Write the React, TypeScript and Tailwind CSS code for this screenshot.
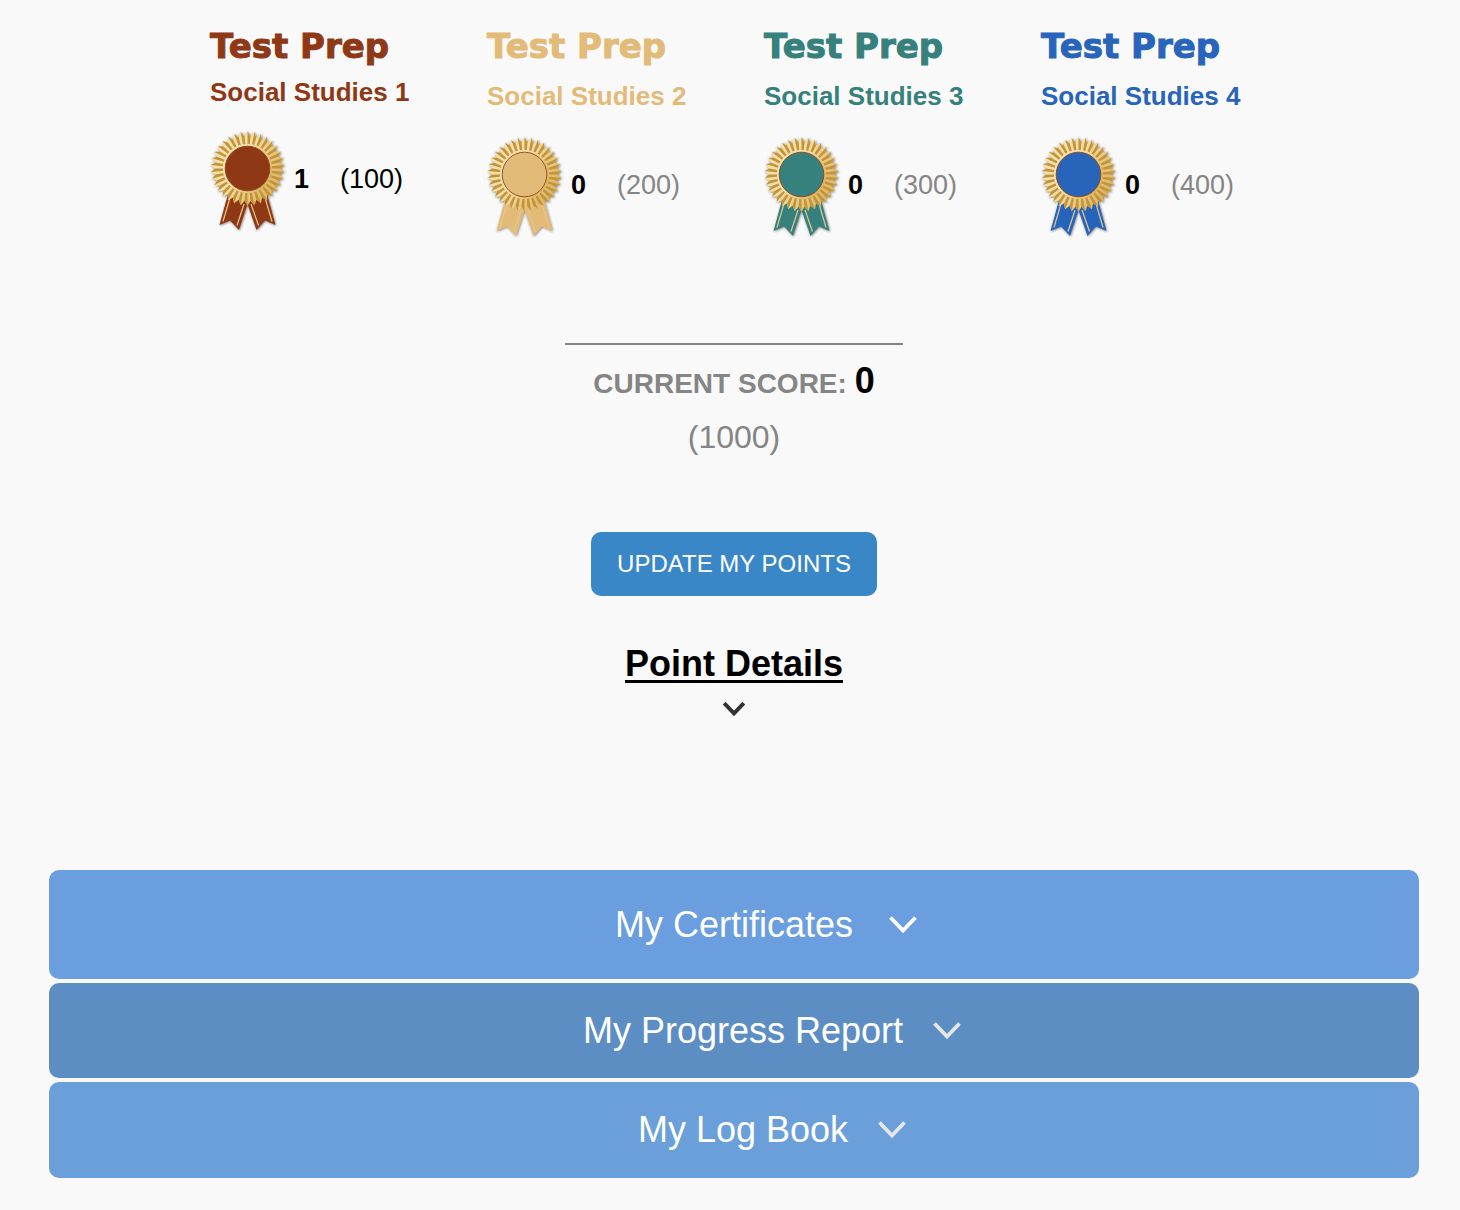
import React, { useState } from 'react';
import clsx from 'clsx';

interface Badge {
  id: number;
  subject: string;
  earned: number;
  points: number;
  color: string;
  textClass: string;
}

const badges: Badge[] = [
  { id: 1, subject: 'Social Studies 1', earned: 1, points: 100, color: '#8f3815', textClass: 'text-[#8f3815]' },
  { id: 2, subject: 'Social Studies 2', earned: 0, points: 200, color: '#e3bb78', textClass: 'text-[#e3bb78]' },
  { id: 3, subject: 'Social Studies 3', earned: 0, points: 300, color: '#36807d', textClass: 'text-[#36807d]' },
  { id: 4, subject: 'Social Studies 4', earned: 0, points: 400, color: '#2864ba', textClass: 'text-[#2864ba]' },
];

const TEETH = 34;

// Point on the rosette, measured in teeth clockwise from the top
const point = (radius: number, step: number) => {
  const angle = (step / TEETH) * Math.PI * 2 - Math.PI / 2;
  return `${(39.5 + radius * Math.cos(angle)).toFixed(2)} ${(42.5 + radius * Math.sin(angle)).toFixed(2)}`;
};

const teeth = Array.from({ length: TEETH }, (_, i) => i);

const outline = teeth.map((i) => `${point(32.5, i - 0.5)} L${point(37.3, i)}`).join(' L');

const Ribbon: React.FC<{ color: string }> = ({ color }) => {
  const id = color.slice(1);

  return (
    <svg viewBox="0 0 80 106" className="w-20 shrink-0" aria-hidden="true">
      <defs>
        <linearGradient id={`gold-${id}`} x1="0" y1="0" x2="1" y2="0.6">
          <stop offset="0" stopColor="#f6e3b4" />
          <stop offset="0.5" stopColor="#f3dca2" />
          <stop offset="1" stopColor="#dcb45f" />
        </linearGradient>
        <filter id={`shadow-${id}`} x="-20%" y="-20%" width="140%" height="140%">
          <feDropShadow dx="0.6" dy="0.6" stdDeviation="1.2" floodColor="#222" floodOpacity="0.65" />
        </filter>
      </defs>
      <g filter={`url(#shadow-${id})`}>
        <path d="M20 68 L11.500 99 L22 94.500 L31 104 L39.500 78 L48.500 104 L57 94.500 L67.500 99 L59 68 Z" fill={color} />
        <path d="M22.500 70 L15 95.500 M36 78 L29 99.500 M43 78 L50.500 99.500 M56.500 70 L64 95.500" stroke="#e6c68a" strokeWidth="1.2" fill="none" />
        <path d={`M${outline} Z`} fill={`url(#gold-${id})`} />
      </g>
      {teeth.map((i) => (
        <path
          key={i}
          d={`M${point(24.5, i)} L${point(37, i)} L${point(32.5, i + 0.5)} L${point(24.5, i + 0.5)} Z`}
          fill="#c2943c"
        />
      ))}
      <circle cx="39.500" cy="42.500" r="23.500" fill="none" stroke={`url(#gold-${id})`} strokeWidth="2" />
      <circle cx="39.500" cy="42.500" r="22.300" fill={color} stroke="#8a431c" strokeWidth="0.9" />
    </svg>
  );
};

const Chevron: React.FC<{ className?: string; weight?: number }> = ({ className, weight = 3.8 }) => (
  <svg viewBox="0 0 28 18" fill="none" stroke="currentColor" className={className} aria-hidden="true">
    <path d="M1.500 1.500 L14 14.500 L26.500 1.500" strokeWidth={weight} />
  </svg>
);

const BadgeCard: React.FC<{ badge: Badge }> = ({ badge }) => {
  const done = badge.earned > 0;

  return (
    <section className="w-[277px] pl-[30px]">
      <h2
        className={clsx(
          "font-['Arial_Black','DejaVu_Sans',sans-serif] text-[34px] leading-10 font-black [-webkit-text-stroke:1px_currentColor]",
          badge.textClass,
        )}
      >
        Test Prep
      </h2>
      <h3 className={clsx('text-[26px] leading-8 font-bold', done ? 'mt-[10px]' : 'mt-[14px]', badge.textClass)}>
        {badge.subject}
      </h3>
      <div className={clsx('-ml-0.5 flex items-center', done ? 'mt-[18px]' : 'mt-5')}>
        <Ribbon color={badge.color} />
        <span className="ml-1.5 w-[46px] text-[27px] leading-8 font-bold text-black">{badge.earned}</span>
        <span className={clsx('text-[27px] leading-8', done ? 'text-black' : 'text-[#858585]')}>({badge.points})</span>
      </div>
    </section>
  );
};

const sections = [
  { title: 'My Certificates', className: 'h-[109px] gap-9 bg-[#6a9ede]', iconClass: 'text-white' },
  { title: 'My Progress Report', className: 'h-[95px] gap-[30px] bg-[#5c8ec3] pl-[18px]', iconClass: 'text-[#e6e6e6]' },
  { title: 'My Log Book', className: 'h-24 gap-[30px] bg-[#6b9fd9] pl-[18px]', iconClass: 'text-[#e6e6e6]' },
];

const App: React.FC = () => {
  const [open, setOpen] = useState<string | null>(null);

  const toggle = (name: string) => setOpen(open === name ? null : name);

  return (
    <main className="min-h-screen bg-[#f9f9f9] pt-[26px] pr-[41px] pb-8 pl-[49px] font-['Liberation_Sans',Arial,sans-serif]">
      <div className="flex flex-wrap justify-center">
        {badges.map((badge) => (
          <BadgeCard key={badge.id} badge={badge} />
        ))}
      </div>

      <div className="mt-[105px] flex flex-col items-center">
        <hr className="w-[338px] border-t-2 border-[#858585]" />
        <p className="mt-4 text-[28px] leading-[44px] font-bold text-[#858585]">
          CURRENT SCORE: <span className="text-4xl text-black">0</span>
        </p>
        <p className="mt-[11px] text-[32px] leading-10 text-[#858585]">(1000)</p>
        <button type="button" className="mt-[75px] h-16 rounded-[10px] bg-[#3a87c8] px-[26px] text-2xl text-white">
          UPDATE MY POINTS
        </button>
        <button
          type="button"
          className="mt-11 flex flex-col items-center text-4xl leading-12 font-bold text-black"
          aria-expanded={open === 'points'}
          onClick={() => toggle('points')}
        >
          <span className="underline decoration-3 underline-offset-4">Point Details</span>
          <Chevron className="mt-[14px] w-[22px] text-[#333]" weight={5} />
        </button>
      </div>

      <div className="mt-[154px] flex flex-col gap-1">
        {sections.map((section) => (
          <button
            key={section.title}
            type="button"
            className={clsx(
              'grid w-full grid-cols-[1fr_auto_1fr] items-center rounded-[10px] text-4xl text-white',
              section.className,
            )}
            aria-expanded={open === section.title}
            onClick={() => toggle(section.title)}
          >
            <span className="col-start-2">{section.title}</span>
            <Chevron className={clsx('w-7', section.iconClass)} />
          </button>
        ))}
      </div>
    </main>
  );
};

export default App;
